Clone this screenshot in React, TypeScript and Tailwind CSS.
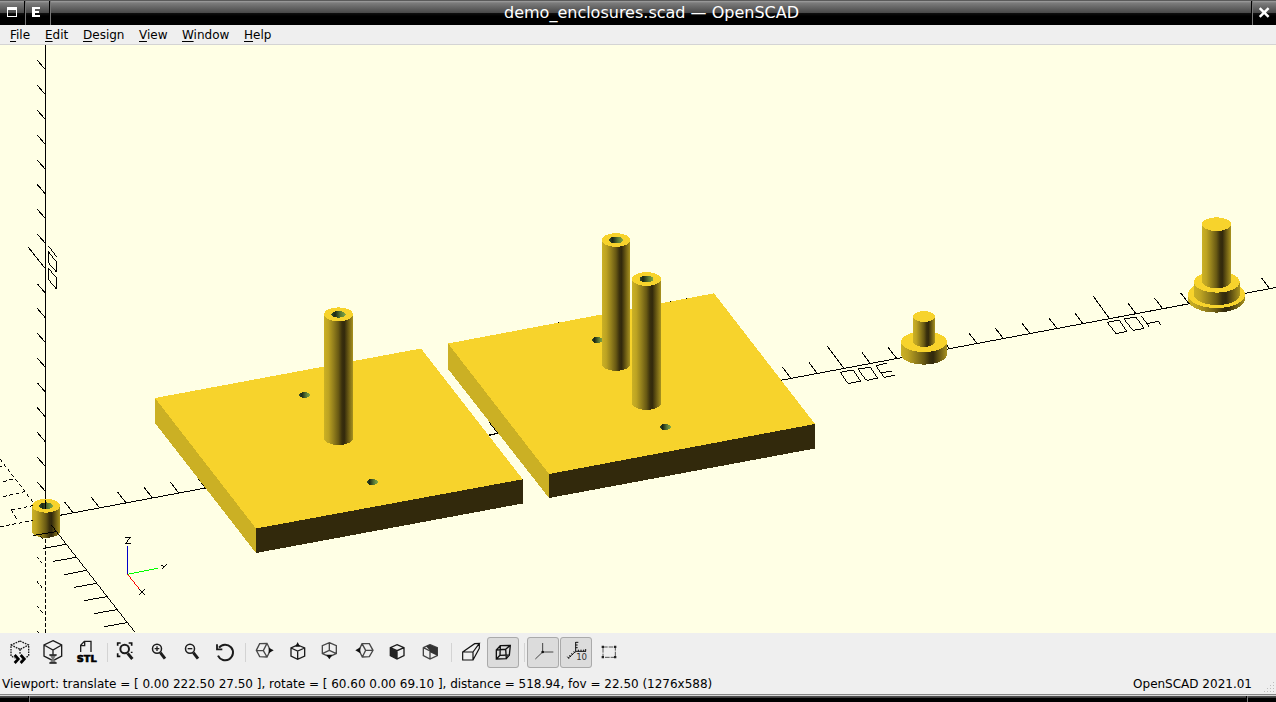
import React from "react";

const INK = "#000000";
const TOP = "#f7d32c";
const SIDE = "#cbb024";
const DARK = "#32290c";

type CylProps = { x1: number; x2: number; top: number; bottom: number; ry: number; hole?: boolean };

function Cylinder({ x1, x2, top, bottom, ry, hole }: CylProps) {
  const rx = (x2 - x1) / 2;
  const cx = (x1 + x2) / 2;
  return (
    <g>
      <path d={`M${x1} ${top}V${bottom}A${rx} ${ry} 0 0 0 ${x2} ${bottom}V${top}Z`} fill="url(#barrel)" />
      <ellipse cx={cx} cy={top} rx={rx} ry={ry} fill={TOP} />
      {hole && <ellipse cx={cx} cy={top} rx={rx * 0.49} ry={ry * 0.49} fill="url(#bore)" />}
    </g>
  );
}

const zTicks = [60.3, 85.3, 110.2, 135.1, 160, 184.5, 209.2, 234, 283.8, 308.4, 333.2, 358, 382.8, 407.6, 432.4, 457.2, 482];
const yTicks = [73, 99.5, 126, 152.3, 178.7, 205.5, 791, 817.3, 870.3, 896.7, 949.5, 977, 1003.3, 1030, 1057, 1083, 1136, 1162.7, 1189, 1269.7];
const axisY = (x: number) => 526.5 - 0.1873 * x;

function Scene() {
  return (
    <svg className="block h-[588px] w-full bg-[#ffffe5]" viewBox="0 45 1276 588" shapeRendering="crispEdges" fill="none">
      <defs>
        <linearGradient id="barrel">
          <stop offset="0" stopColor="#cbb125" />
          <stop offset=".15" stopColor="#bda322" />
          <stop offset=".35" stopColor="#8d7a1b" />
          <stop offset=".5" stopColor="#675813" />
          <stop offset=".62" stopColor="#3a300d" />
          <stop offset=".7" stopColor="#32290c" />
          <stop offset=".82" stopColor="#625312" />
          <stop offset="1" stopColor="#a9931f" />
        </linearGradient>
        <linearGradient id="bore">
          <stop offset="0" stopColor="#39512a" />
          <stop offset=".25" stopColor="#1c2815" />
          <stop offset=".65" stopColor="#5b7a35" />
          <stop offset="1" stopColor="#83aa47" />
        </linearGradient>
      </defs>

      <g stroke={INK} strokeWidth="1">
        <path d="M60 515.3L1276 287.5M45.5 45V505" />
        {yTicks.map((x) => (
          <path key={x} d={`M${x} ${axisY(x)}l-8.4 -11`} />
        ))}
        {zTicks.map((y) => (
          <path key={y} d={`M37.3 ${y}l8 9.3`} />
        ))}
        <path d="M28.3 247.2L45.3 268.7M843.7 368L827.3 346.3M1109.5 318.7L1093.3 296.3" />
      </g>

      <g stroke={INK} transform="translate(0 40) scale(.33333)" strokeWidth="3">
        <path d="M145 618L170 650M145 634V668L170 697V667ZM145 685V718L170 748V714Z" />
      </g>
      <g stroke={INK} transform="translate(770 280) scale(.33333)" strokeWidth="3">
        <path d="M211 277L246 270L252 273L272 303L238 310L232 308ZM264 267L297 262L303 264L323 294L292 301L286 298ZM350 250L317 257L343 292L375 286M330 278L366 274" />
      </g>
      <g stroke={INK} transform="translate(1030 200) scale(.33333)" strokeWidth="3">
        <path d="M232 367L267 360L291 394L258 401ZM282 357L317 351L343 385L309 391ZM333 347L358 381M350 371L386 364L392 374" />
      </g>

      <path d="M155 398L421 348.5L522.7 479.3L256 528.5Z" fill={TOP} />
      <path d="M155 398L256 528.5V553L155 423Z" fill={SIDE} />
      <path d="M256 528.5L522.7 479.3V503.5L256 553Z" fill={DARK} />
      <path d="M489 422L498 433.2L489 435.4" stroke={INK} />
      <path d="M448 343.5L714 293.3L815 424L549 474Z" fill={TOP} />
      <path d="M448 343.5L549 474V498L448 369Z" fill={SIDE} />
      <path d="M549 474L815 424V448.5L549 498Z" fill={DARK} />
      <path d="M558 322h1v1h-1zM670 301h1v1h-1zM686 298h1v1h-1z" fill={INK} />

      {[[304.5, 395], [372.3, 482], [597.2, 340], [665.3, 427]].map(([x, y]) => (
        <ellipse key={x} cx={x} cy={y} rx="5.5" ry="3" fill="url(#bore)" />
      ))}
      <Cylinder x1={324} x2={353} top={314.3} bottom={438.2} ry={6.9} hole />
      <Cylinder x1={602} x2={630} top={240} bottom={364} ry={6.9} hole />
      <Cylinder x1={632} x2={661} top={279} bottom={403} ry={6.9} hole />
      <Cylinder x1={32} x2={60} top={505.8} bottom={531} ry={6.9} hole />

      <Cylinder x1={901} x2={947} top={341.7} bottom={354.3} ry={10.3} />
      <Cylinder x1={913} x2={935} top={316.5} bottom={341.5} ry={5.4} />
      <Cylinder x1={1187.8} x2={1245} top={294.5} bottom={299} ry={13.6} />
      <Cylinder x1={1193.8} x2={1239.8} top={282} bottom={294.5} ry={10.6} />
      <Cylinder x1={1202} x2={1231} top={224.2} bottom={281.3} ry={6.9} />

      <g stroke={INK} transform="translate(0 440) scale(.33333)" strokeWidth="3">
        <path d="M136.5 180V206M154 255L405 577" />
        <path d="M98 287L168 275M130 325L199 313M160 364L229 352M193 404L259 391M222 442L290 430M252 482L320 470M282 521L350 509M312 560L382 548" />
        <path d="M136.5 298V580" strokeDasharray="10 8" />
        <path d="M0 260L98 242M0 57L98 185M10 125L46 115M10 170L74 155M0 80L6 79M34 210L98 197M34 210L52 241" strokeDasharray="11 8" />
        <path d="M122 289L132 300M111 350L131 375M111 424L131 449M111 498L131 523M111 573L117 579" strokeDasharray="9 7" />
        <path d="M376 292H391L376 311H392M483 374L491 381M500 374L485 388M418 449L434 464M434 449L418 464" />
        <path d="M383 403V318" stroke="#0000c8" />
        <path d="M383 403L473 385" stroke="#00ff00" />
        <path d="M383 403L418 447" stroke="#ff0000" />
      </g>
    </svg>
  );
}

function Tool({ box, active, children }: { box: string; active?: boolean; children: React.ReactNode }) {
  return (
    <button
      className={
        active
          ? "mr-px h-[31px] w-8 shrink-0 rounded-[3px] bg-[#dcdcdc] outline-1 -outline-offset-1 outline-[#aaaaaa]"
          : "h-[31px] w-[33px] shrink-0"
      }
    >
      <svg className="block h-8 w-[33px]" viewBox={box} fill="none" stroke="#1c1c1c" strokeWidth="4">
        {children}
      </svg>
    </button>
  );
}

const Sep = ({ wide }: { wide: string }) => (
  <span className={`flex shrink-0 justify-center pl-[2px] ${wide}`}>
    <span className="mt-[6px] h-[19px] w-px bg-[#d3d3d3]" />
  </span>
);

function Toolbar() {
  return (
    <div className="flex h-[42px] items-start bg-[#efefef] pt-1 pl-1">
      <Tool box="12 21 99 96">
        <path d="M60 33L86 45V78L60 90L33 78V45ZM33 45L60 58L86 45M60 58V72" strokeDasharray="5 3" />
        <path d="M44 74L56 87L44 100M62 74L74 87L62 100" stroke="#efefef" strokeWidth="12" />
        <path d="M44 75L55 87L44 99M62 75L73 87L62 99" stroke="#000" strokeWidth="8" />
      </Tool>
      <Tool box="111 21 99 96">
        <path d="M159 32L185 45V78L159 92L132 78V45ZM132 45L159 60L185 45M159 60V74" />
        <path d="M149 74H169L162 87L169 100H149L156 87Z" fill="#777" stroke="none" />
        <path d="M148 75H170M148 99H170" strokeWidth="4" />
      </Tool>
      <Tool box="210 21 99 96">
        <path d="M242 66V46L253 34H273V66M254 34V47H242" />
        <text x="230" y="95" textLength="60" lengthAdjust="spacingAndGlyphs" className="font-['DejaVu_Sans'] text-[28px] font-bold" fill="#000" stroke="#000" strokeWidth="2">STL</text>
      </Tool>
      <Sep wide="w-[6px]" />
      <Tool box="327 21 99 96">
        <path d="M353 47V39H362M386 39H395V47M353 70V79H361M395 65V69" stroke="#111" strokeWidth="5" />
        <circle cx="374" cy="57" r="13" strokeWidth="6" />
        <path d="M383 70L397 87" strokeWidth="9" />
      </Tool>
      <Tool box="426 21 99 96">
        <circle cx="471" cy="56" r="13.5" strokeWidth="4.5" />
        <path d="M464 56H478M471 49V63" />
        <path d="M481 68L495 86" strokeWidth="9" />
      </Tool>
      <Tool box="525 21 99 96">
        <circle cx="570" cy="56" r="13.5" strokeWidth="4.5" />
        <path d="M563 56H577" />
        <path d="M580 68L594 86" strokeWidth="9" />
      </Tool>
      <Tool box="624 21 99 96">
        <path d="M657 53A23.5 23.5 0 1 1 654 77" strokeWidth="6" />
        <path d="M651 43V58H667" strokeWidth="5.5" />
      </Tool>
      <Sep wide="w-[7px]" />
      <Tool box="744 21 99 96">
        <path d="M779 41L801 40L811 61L801 81L779 80L769 61ZM769 61L790 62L801 40M790 62L801 81" stroke="#484848" />
        <path d="M806 53L821 61L806 70Z" fill="#111" stroke="none" />
      </Tool>
      <Tool box="843 21 99 96">
        <path d="M893 45L914 54V78L893 88L873 78V54ZM873 54L893 63L914 54M893 63V88" />
        <path d="M893 36L900 50H886Z" fill="#111" stroke="none" />
      </Tool>
      <Tool box="-18 21 99 96">
        <path d="M28 38L49 47V71L28 80L7 71V47ZM28 38V61L7 71M28 61L49 71" stroke="#484848" />
        <path d="M19 74H37L28 88Z" fill="#111" stroke="none" />
      </Tool>
      <Tool box="81 21 99 96">
        <path d="M126 41H148L159 61L148 80L127 81L117 61ZM126 41L137 61L127 81M137 61H159" stroke="#484848" />
        <path d="M106 61L121 52V70Z" fill="#111" stroke="none" />
      </Tool>
      <Tool box="180 21 99 96">
        <path d="M231 44L252 53V77L231 87L211 77V53ZM211 53L231 62L252 53M231 62V87" />
        <path d="M211 53L231 62V87L211 77Z" fill="#222" stroke="none" />
      </Tool>
      <Tool box="279 21 99 96">
        <path d="M330 44L352 53V77L330 87L310 77V53ZM310 53L330 63V87M310 53L330 44" stroke="#444" />
        <path d="M330 44L352 53V77L330 67ZM318 49L330 44V62Z" fill="#333" stroke="none" />
      </Tool>
      <Sep wide="w-[8px]" />
      <Tool box="402 21 99 96">
        <path d="M428 66H459V90H428ZM428 66L464 41L478 40L459 66M459 90L478 55V40" stroke="#111" strokeWidth="3.5" />
      </Tool>
      <Tool box="501 21 99 96" active>
        <path d="M529 60L557 58L559 86L529 87ZM541 47L571 46L568 75L540 76ZM529 60L541 47M557 58L571 46M559 86L568 75M529 87L540 76" stroke="#111" />
      </Tool>
      <Sep wide="w-[7px]" />
      <Tool box="621 21 99 96" active>
        <path d="M668 39V66H700M668 66L646 87" stroke="#333" strokeWidth="2.7" />
        <circle cx="668" cy="66" r="4" fill="#111" stroke="none" />
      </Tool>
      <Tool box="720 21 99 96" active>
        <path d="M767 36V64H798M767 37H775M767 45H773M767 53H773M775 64V59M783 64V59M791 64V59M797 64V57M767 64L744 85M761 64L766 69M754 70L759 75M748 76L753 81M742 80L747 86" stroke="#111" strokeWidth="3" />
        <text x="769" y="91" textLength="32" className="font-['DejaVu_Sans'] text-[26px]" fill="#333" stroke="none">10</text>
      </Tool>
      <Tool box="819 21 99 96">
        <path d="M849 51H886V82H849Z" stroke="#555" strokeWidth="3" strokeDasharray="14 3" />
        <path d="M845 47h7v7h-7zM882 47h7v7h-7zM845 78h7v7h-7zM882 78h7v7h-7z" fill="#222" stroke="none" />
      </Tool>
    </div>
  );
}

const menus = [
  { k: "F", rest: "ile", w: "w-[35px]" },
  { k: "E", rest: "dit", w: "w-[38px]" },
  { k: "D", rest: "esign", w: "w-[56px]" },
  { k: "V", rest: "iew", w: "w-[43px]" },
  { k: "W", rest: "indow", w: "w-[62px]" },
  { k: "H", rest: "elp", w: "w-[40px]" },
];

export default function App() {
  return (
    <div className="flex h-[702px] w-[1276px] flex-col overflow-hidden bg-[#efefef] font-['DejaVu_Sans',sans-serif] text-black">
      <header className="flex h-[25px] shrink-0 border-t border-[#5a5a5a] bg-[linear-gradient(to_bottom,#a0a0a0_0px,#7c7c7c_2px,#484848_12px,#101010_12px,#000_15px)] text-white">
        <div className="flex w-[25px] border-r border-black pt-[6px] pl-[7px]">
          <span className="h-[10px] w-[10px] shrink-0 border border-t-[3px] border-white" />
        </div>
        <div className="flex w-[25px] border-x border-r-black border-l-[#777]">
          <svg className="block h-6 w-6 shrink-0" viewBox="0 0 24 24" fill="none" stroke="#fff" strokeWidth="2" shapeRendering="crispEdges">
            <path d="M14 7H6M7.5 6V16M6 11H13M6 15H14" />
            <path d="M7.5 6V16" strokeWidth="3" />
          </svg>
        </div>
        <div className="flex-1 border-l border-[#777] text-center text-[16px] leading-[23px]">
          <span className="pl-px">demo_enclosures.scad — OpenSCAD</span>
        </div>
        <div className="flex w-[25px] border-l border-black">
          <svg className="block h-6 w-6 border-l border-[#777]" viewBox="0 0 24 24" fill="none" stroke="#fff" strokeWidth="2.6">
            <path d="M7 7L16.3 16M16.3 7L7 16" />
          </svg>
        </div>
      </header>

      <nav className="flex h-5 shrink-0 border-b border-[#d4d4d4] pt-px pl-[10px] text-[12px] leading-[19px]">
        {menus.map((m) => (
          <span key={m.k} className={`${m.w} shrink-0 whitespace-nowrap`}>
            <span className="underline underline-offset-2">{m.k}</span>
            {m.rest}
          </span>
        ))}
      </nav>

      <Scene />
      <Toolbar />

      <footer className="flex h-[19px] shrink-0 items-start justify-between pr-px pl-[2px] text-[12px] leading-[19px] whitespace-pre">
        <span className="tracking-[-0.012px]">Viewport: translate = [ 0.00 222.50 27.50 ], rotate = [ 60.60 0.00 69.10 ], distance = 518.94, fov = 22.50 (1276x588)</span>
        <span className="flex">
          <span className="mr-[12px]">OpenSCAD 2021.01</span>
          <svg className="mt-[7px] h-[11px] w-[11px]" viewBox="0 0 11 11" fill="#bdbdbd">
            <path d="M9 0h1v1h-1zM9 3h1v1h-1zM6 3h1v1h-1zM9 6h1v1h-1zM6 6h1v1h-1zM3 6h1v1h-1zM9 9h1v1h-1zM6 9h1v1h-1zM3 9h1v1h-1zM0 9h1v1h-1z" />
          </svg>
        </span>
      </footer>

      <div className="flex h-2 shrink-0 justify-between bg-[linear-gradient(to_bottom,#868686_0px,#868686_1px,#d8d8d8_1px,#d8d8d8_2px,#555_2px,#333_4px,#000_4px)] px-[28px] pt-[2px]">
        <span className="h-[6px] w-[2px] border-r border-[#777] bg-black" />
        <span className="h-[6px] w-[2px] border-r border-[#777] bg-black" />
      </div>
    </div>
  );
}
